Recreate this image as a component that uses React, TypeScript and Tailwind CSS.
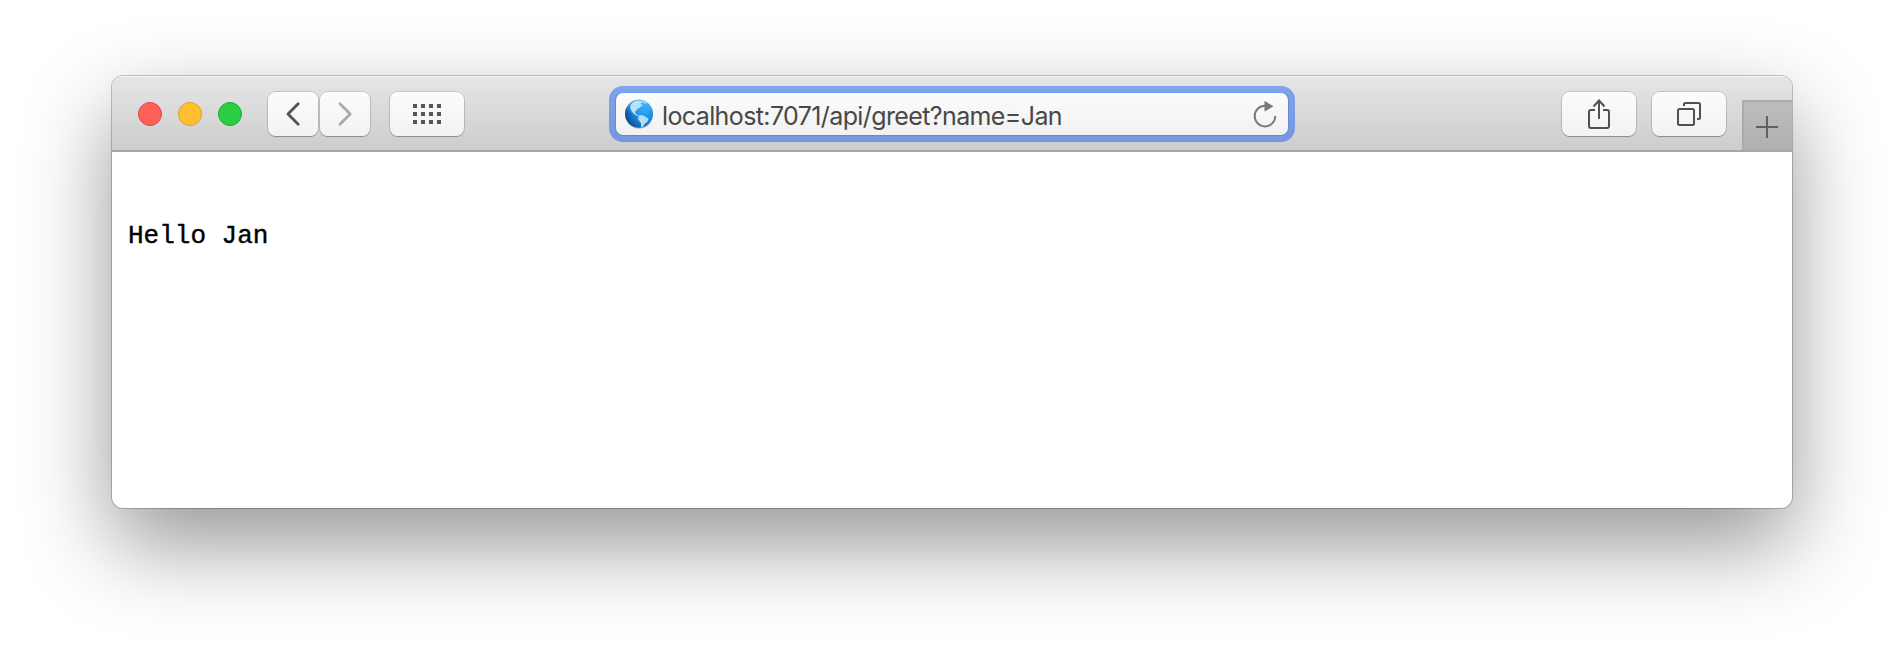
import type { ReactNode } from "react";

function ToolButton({ className, children, label }: { className: string; children: ReactNode; label: string }) {
  return (
    <button
      aria-label={label}
      className={`flex h-11 items-center justify-center rounded-[8px] bg-linear-to-b from-[#fcfcfc] to-[#f2f2f2] shadow-[0_0_0_1px_rgba(0,0,0,0.12),0_1px_1px_rgba(0,0,0,0.24)] ${className}`}
    >
      {children}
    </button>
  );
}

function Globe() {
  return (
    <svg width="32" height="32" viewBox="0 0 32 32" className="shrink-0">
      <defs>
        <radialGradient id="sea" cx="0.72" cy="0.42" r="0.75">
          <stop offset="0" stopColor="#1da1fa" />
          <stop offset="0.5" stopColor="#1a86de" />
          <stop offset="1" stopColor="#0e4790" />
        </radialGradient>
        <linearGradient id="shine" x1="0" y1="0" x2="0" y2="1">
          <stop offset="0" stopColor="#8be0ff" stopOpacity="0.85" />
          <stop offset="1" stopColor="#3fb4ff" stopOpacity="0" />
        </linearGradient>
        <clipPath id="disc">
          <circle cx="16" cy="15.8" r="14" />
        </clipPath>
      </defs>
      <ellipse cx="16" cy="17" rx="13.8" ry="13.8" fill="#000" opacity="0.22" />
      <circle cx="16" cy="15.8" r="14" fill="url(#sea)" />
      <g clipPath="url(#disc)">
        <ellipse cx="17" cy="8" rx="14" ry="11" fill="url(#shine)" />
        <path d="M8 6 L12 3 L17 2.4 L20 4 L17.5 5.5 L19.5 7 L17 9.5 L14 11 L13.5 13 L11.5 13.5 L13 16 L15.5 17.2 L14.5 18 L11 16 L8.5 13 L7.2 9.5Z" fill="#b9e2f9" />
        <path d="M15.5 17.5 L19 17 L22 18.5 L25.5 20.5 L24.5 23.5 L22 25.5 L20 28.5 L18 29.5 L18 25 L15.2 21.5Z" fill="#b9dcf5" />
        <path d="M18 3 L22 2 L25 5 L22 6Z" fill="#a9e2fc" opacity="0.7" />
      </g>
    </svg>
  );
}

const gridCells = [0, 1, 2, 3, 4, 5, 6, 7, 8, 9, 10, 11];

export default function App() {
  return (
    <div className="h-[656px] w-[1904px] overflow-hidden bg-white px-28 pt-[76px]">
      <div className="flex h-[432px] flex-col overflow-hidden rounded-[11px] bg-white shadow-[0_0_0_1px_rgba(0,0,0,0.22),0_36px_88px_rgba(0,0,0,0.42)]">
        <header className="flex h-[76px] shrink-0 items-start border-b-2 border-[#a9a7a9] bg-linear-to-b from-[#e6e6e6] to-[#cdcdcd] shadow-[inset_0_1px_0_#f6f6f6]">
          <div className="ml-[26px] mt-[26px] flex gap-4">
            <span className="size-6 rounded-full border border-[#e2453f] bg-[#ff6159]" />
            <span className="size-6 rounded-full border border-[#dfa023] bg-[#ffbf2f]" />
            <span className="size-6 rounded-full border border-[#1dad2b] bg-[#29ce42]" />
          </div>
          <div className="ml-[26px] mt-4 flex gap-[2px]">
            <ToolButton label="Back" className="w-[50px]">
              <svg width="16" height="26" viewBox="0 0 16 26" fill="none" stroke="#535353" strokeWidth="2.8" strokeLinecap="round" strokeLinejoin="round">
                <path d="M13.2 2.8 L3 13 L13.2 23.2" />
              </svg>
            </ToolButton>
            <ToolButton label="Forward" className="w-[50px]">
              <svg width="16" height="26" viewBox="0 0 16 26" fill="none" stroke="#aaaaaa" strokeWidth="2.8" strokeLinecap="round" strokeLinejoin="round">
                <path d="M3 2.8 L13.2 13 L3 23.2" />
              </svg>
            </ToolButton>
          </div>
          <div className="ml-5 mt-4">
            <ToolButton label="Top sites" className="w-[74px]">
              <div className="grid grid-cols-4 gap-1">
                {gridCells.map((n) => (
                  <span key={n} className="size-1 bg-[#555555]" />
                ))}
              </div>
            </ToolButton>
          </div>
          <div className="ml-[145px] mt-[10px] flex h-14 w-[686px] rounded-[14px] bg-linear-to-b from-[#80a4ea] to-[#7397de] p-1.5">
            <div className="flex flex-1 items-center rounded-[8px] border border-[#6389dc] border-t-[#6d98ee] bg-linear-to-b from-[#fcfcfc] to-[#f1f1f1] pl-[7px] pr-[11px]">
              <Globe />
              <span className="ml-[7px] mt-[3px] whitespace-nowrap font-['Inter','Liberation_Sans',sans-serif] text-[25px] leading-8 tracking-[-0.61px] text-[#484848]">
                localhost:7071/api/greet?name=Jan
              </span>
              <svg width="24" height="28" viewBox="0 0 24 28" fill="none" className="ml-auto">
                <path d="M12 5.8 A10.3 10.3 0 1 0 22.3 16.1" stroke="#797979" strokeWidth="2" />
                <path d="M11.5 0.8 L20.5 6.3 L11.5 11.5Z" fill="#797979" />
              </svg>
            </div>
          </div>
          <div className="ml-auto mt-4 flex gap-4">
            <ToolButton label="Share" className="w-[74px]">
              <svg width="24" height="32" viewBox="0 0 24 32" fill="none" stroke="#515151" strokeWidth="2">
                <path d="M8 12 H4 Q2 12 2 14 V28 Q2 30 4 30 H20 Q22 30 22 28 V14 Q22 12 20 12 H16" />
                <path d="M12 21 V2.5 M6.5 8.5 L12 2.5 L17.5 8.5" />
              </svg>
            </ToolButton>
            <ToolButton label="Show all tabs" className="w-[74px]">
              <svg width="26" height="26" viewBox="0 0 26 26" fill="none" stroke="#515151" strokeWidth="2">
                <rect x="2" y="8" width="16" height="16" rx="1.5" />
                <path d="M8 5 V3.5 Q8 2 9.5 2 H22.5 Q24 2 24 3.5 V16.5 Q24 18 22.5 18 H21" />
              </svg>
            </ToolButton>
          </div>
          <button aria-label="New tab" className="ml-4 mt-6 flex h-[50px] w-[50px] items-center justify-center border-l-2 border-t-2 border-[#ababab] bg-linear-to-b from-[#bdbdbd] to-[#b0b0b0] pr-[2px]">
            <svg width="22" height="22" viewBox="0 0 22 22" stroke="#606060" strokeWidth="2" className="mt-[2px]">
              <path d="M11 0 V22 M0 11 H22" />
            </svg>
          </button>
        </header>
        <main className="px-4 pt-[68px]">
          <pre className="font-['Courier_New','Liberation_Mono',monospace] text-[26px] leading-8 text-black [-webkit-text-stroke:0.4px_black]">Hello Jan</pre>
        </main>
      </div>
    </div>
  );
}
